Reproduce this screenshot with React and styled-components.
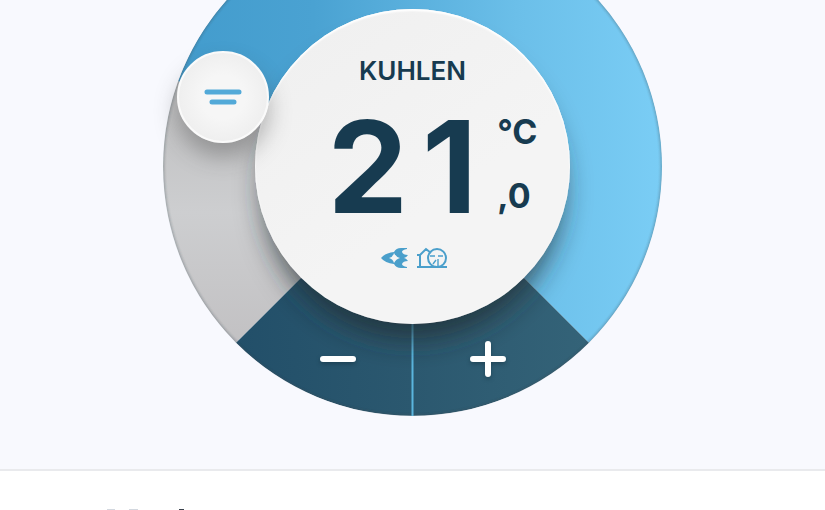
import React, { useState } from "react";
import styled, { createGlobalStyle } from "styled-components";

const GlobalStyle = createGlobalStyle`
  body {
    margin: 0;
    background: #fff;
    font-family: Inter, "Liberation Sans", sans-serif;
    color: #173b50;
    overflow: hidden;
  }
`;

const Stage = styled.main`
  display: flex;
  justify-content: center;
  overflow: hidden;
  padding-bottom: 53px;
  background: #f8f9fe;
  border-bottom: 2px solid #e9eaed;
`;
const Dial = styled.div`
  position: relative;
  display: grid;
  justify-items: center;
  align-items: center;
  width: 499px;
  height: 499px;
  margin-top: -83px;
  > * {
    grid-area: 1 / 1;
  }
`;
const Ring = styled.svg`
  display: block;
  width: 100%;
  height: 100%;
`;
const Face = styled.section`
  display: flex;
  flex-direction: column;
  align-items: center;
  box-sizing: border-box;
  width: 315px;
  height: 315px;
  padding-top: 46px;
  border-radius: 50%;
  background: linear-gradient(145deg, #efefef, #f4f4f4 60%);
  box-shadow: inset 0 2px 2px #fff, inset 0 0 2px #fff;
`;
const Mode = styled.h1`
  margin: 0;
  font-size: 26px;
  line-height: 32px;
  font-weight: 600;
`;
const Reading = styled.div`
  display: flex;
  align-items: center;
  gap: 20px;
  margin-top: 16px;
  padding-left: 40px;
`;
const Degrees = styled.span`
  display: flex;
  gap: 14px;
  font-size: 128px;
  line-height: 128px;
  font-weight: 700;
`;
const Units = styled.span`
  display: flex;
  flex-direction: column;
  gap: 24px;
  padding-bottom: 6px;
  font-size: 34px;
  line-height: 40px;
  font-weight: 700;
`;
const Status = styled.div`
  display: flex;
  gap: 8px;
  margin-top: 16px;
  padding-left: 4px;
  color: #4a9fcb;
  svg {
    display: block;
  }
`;
const Controls = styled.div`
  display: grid;
  grid-template-columns: 150px 150px;
  align-self: end;
  margin-bottom: 22px;
`;
const StepButton = styled.button`
  display: flex;
  align-items: center;
  justify-content: center;
  height: 70px;
  padding: 0;
  border: 0;
  background: none;
  cursor: pointer;
  svg {
    filter: drop-shadow(0 2px 2px rgba(10, 30, 40, 0.35));
  }
`;
const Knob = styled.button`
  position: absolute;
  left: 14px;
  top: 134px;
  display: flex;
  align-items: center;
  justify-content: center;
  width: 92px;
  height: 92px;
  padding: 0;
  border: 2px solid #fafafa;
  border-radius: 50%;
  background: radial-gradient(circle, #f6f6f6 35%, #e9e9e9 100%);
  box-shadow: 0 14px 22px rgba(60, 60, 60, 0.35);
  cursor: pointer;
`;
const Footer = styled.footer`
  padding: 37px 103px 0;
`;

const Track = () => (
  <Ring viewBox="0 0 498 498" aria-hidden="true">
    <defs>
      <linearGradient id="cool" x1="0" x2="1">
        <stop offset="0" stopColor="#439ccd" />
        <stop offset="0.28" stopColor="#4aa2d2" />
        <stop offset="0.7" stopColor="#6bbfe9" />
        <stop offset="1" stopColor="#7acdf5" />
      </linearGradient>
      <linearGradient id="idle" x1="0" x2="0" y1="0" y2="1">
        <stop offset="0" stopColor="#bdbdbe" />
        <stop offset="0.5" stopColor="#cdced0" />
        <stop offset="1" stopColor="#c2c1c3" />
      </linearGradient>
      <linearGradient id="steps" x1="0" x2="1">
        <stop offset="0" stopColor="#224f69" />
        <stop offset="0.5" stopColor="#2b586f" />
        <stop offset="1" stopColor="#346378" />
      </linearGradient>
      <filter id="soft" x="-30%" y="-30%" width="160%" height="160%">
        <feGaussianBlur stdDeviation="14" />
      </filter>
      <filter id="edge">
        <feGaussianBlur stdDeviation="1" />
      </filter>
      <clipPath id="disc">
        <circle cx="249" cy="249" r="249" />
      </clipPath>
    </defs>
    <g clipPath="url(#disc)">
      <path d="M249 249L15 164A249 249 0 1 1 425 425Z" fill="url(#cool)" />
      <path d="M249 249L15 164A249 249 0 0 0 73 425Z" fill="url(#idle)" />
      <path d="M249 249L73 425A249 249 0 0 0 425 425Z" fill="url(#steps)" />
      <circle
        cx="249"
        cy="249"
        r="249"
        fill="none"
        stroke="#3c4650"
        strokeOpacity="0.3"
        strokeWidth="3"
        filter="url(#edge)"
      />
      <path d="M249 249V498" stroke="#5bb5de" strokeWidth="2" />
      <circle cx="249" cy="272" r="149" fill="#222b30" fillOpacity="0.75" filter="url(#soft)" />
    </g>
  </Ring>
);

const AirflowMark = () => (
  <svg width="27" height="22" viewBox="0 0 27 22" fill="currentColor" aria-hidden="true">
    <path
      fillRule="evenodd"
      d="M0 11Q4 6 13 5Q15 1 20 1H26V2Q21 3 21 5Q22 8 27 8Q25 11 23 11Q25 11 27 14Q22 14 21 17Q21 19 26 20V21H20Q15 21 13 17Q4 16 0 11ZM8 11Q12 12 13 16Q15 12 19 11Q15 10 13 6Q12 10 8 11Z"
    />
  </svg>
);

const HomeMark = () => (
  <svg width="32" height="22" viewBox="0 0 32 22" fill="none" stroke="currentColor" strokeWidth="2" aria-hidden="true">
    <path d="M1 20H31M4 20V8M1 8H4L10 2L15 6" />
    <circle cx="21" cy="11" r="9" />
    <path d="M14 9H19M22 9H27M20 13L17 17M22 12V19" strokeWidth="1.4" />
  </svg>
);

const StepIcon = ({ plus }) => (
  <svg width="36" height="36" viewBox="0 0 36 36" stroke="#fff" strokeWidth="6" strokeLinecap="round" aria-hidden="true">
    <path d={plus ? "M3 18H33M18 3V33" : "M3 18H33"} />
  </svg>
);

const App = () => {
  const [degrees, setDegrees] = useState(21);

  return (
    <>
      <GlobalStyle />
      <Stage>
        <Dial>
          <Track />
          <Face>
            <Mode>KUHLEN</Mode>
            <Reading>
              <Degrees>
                {String(degrees).split("").map((digit, i) => (
                  <span key={i}>{digit}</span>
                ))}
              </Degrees>
              <Units>
                <span>°C</span>
                <span>,0</span>
              </Units>
            </Reading>
            <Status>
              <AirflowMark />
              <HomeMark />
            </Status>
          </Face>
          <Controls>
            <StepButton aria-label="Decrease temperature" onClick={() => setDegrees(degrees - 1)}>
              <StepIcon />
            </StepButton>
            <StepButton aria-label="Increase temperature" onClick={() => setDegrees(degrees + 1)}>
              <StepIcon plus />
            </StepButton>
          </Controls>
          <Knob aria-label="Adjust dial">
            <svg width="40" height="18" viewBox="0 0 40 18" stroke="#52a9d8" strokeWidth="5" strokeLinecap="round" aria-hidden="true">
              <path d="M4 4H36M9 14H31" />
            </svg>
          </Knob>
        </Dial>
      </Stage>
      <Footer>
        <svg width="90" height="22" viewBox="0 0 90 22" fill="none" aria-hidden="true">
          <path d="M4 2H12M26 2H35" stroke="#d3d8df" strokeWidth="2" />
          <path d="M76 2H81" stroke="#3a424c" strokeWidth="2" />
        </svg>
      </Footer>
    </>
  );
};

export default App;
